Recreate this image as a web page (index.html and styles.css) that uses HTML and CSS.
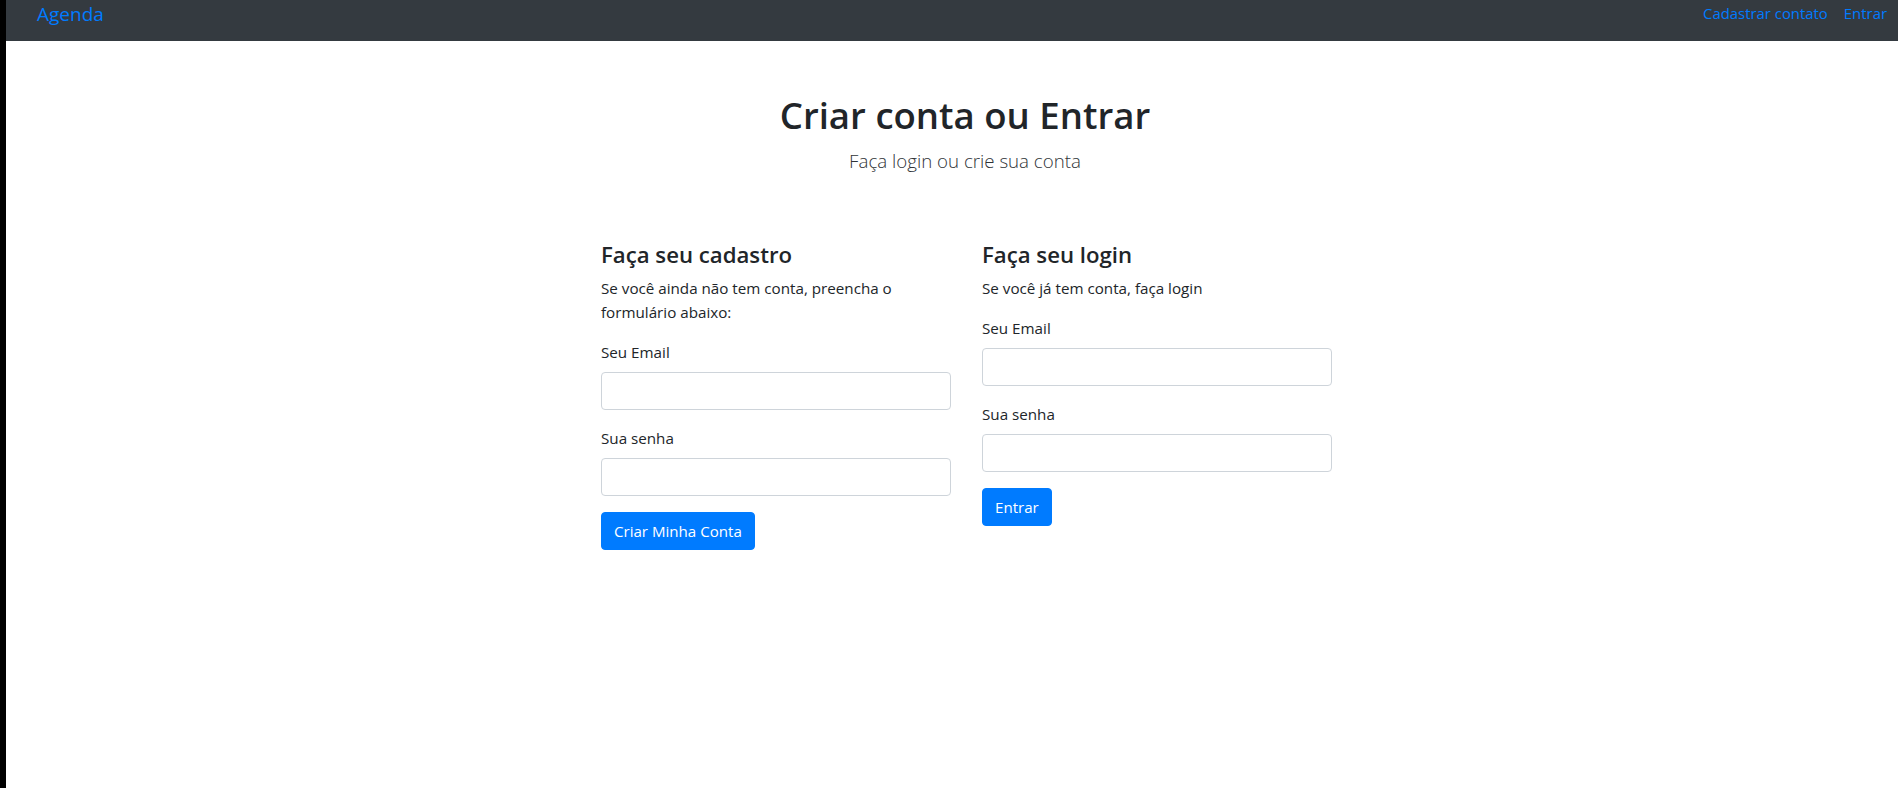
FILE: index.html
```html
<!DOCTYPE html>
<html lang="pt-BR">
<head>
<meta charset="utf-8">
<title>Agenda</title>
<link rel="stylesheet" href="styles.css">
</head>
<body>
<div class="edge"></div>
<div class="page">
  <nav class="navbar">
    <a class="brand" href="#">Agenda</a>
    <div class="nav-links">
      <a class="nav-link" href="#">Cadastrar contato</a>
      <a class="nav-link" href="#">Entrar</a>
    </div>
  </nav>
  <main>
    <header class="hero">
      <h1 class="title">Criar conta ou Entrar</h1>
      <p class="lead">Faça login ou crie sua conta</p>
    </header>
    <div class="columns">
      <section class="col">
        <h4 class="col-title">Faça seu cadastro</h4>
        <p class="col-text">Se você ainda não tem conta, preencha o formulário abaixo:</p>
        <form class="form">
          <div class="form-group">
            <label class="label">Seu Email</label>
            <input class="input" type="email">
          </div>
          <div class="form-group">
            <label class="label">Sua senha</label>
            <input class="input" type="password">
          </div>
          <button class="btn" type="button">Criar Minha Conta</button>
        </form>
      </section>
      <section class="col">
        <h4 class="col-title">Faça seu login</h4>
        <p class="col-text">Se você já tem conta, faça login</p>
        <form class="form">
          <div class="form-group">
            <label class="label">Seu Email</label>
            <input class="input" type="email">
          </div>
          <div class="form-group">
            <label class="label">Sua senha</label>
            <input class="input" type="password">
          </div>
          <button class="btn" type="button">Entrar</button>
        </form>
      </section>
    </div>
  </main>
</div>
</body>
</html>
```

FILE: styles.css
```css
* { box-sizing: border-box; }
html, body { margin: 0; height: 100%; }
body {
  display: flex;
  overflow: hidden;
  background: #fff;
  color: #212529;
  font-family: "Open Sans", "Noto Sans", sans-serif;
  font-size: 15.2px;
  line-height: 24px;
}
.edge { width: 6px; flex: none; background: #000; }
.page { width: 1918px; flex: none; }

.navbar {
  height: 41px;
  background: #343a40;
  display: flex;
  justify-content: space-between;
  align-items: flex-start;
  padding: 0 29px 0 31px;
}
.brand {
  color: #007bff;
  text-decoration: none;
  font-size: 19px;
  line-height: 24px;
  margin-top: 2px;
}
.nav-links { display: flex; }
.nav-link {
  color: #007bff;
  text-decoration: none;
  padding: 0 8px;
  font-size: 14.9px;
  line-height: 24px;
  margin-top: 1px;
}

.hero { text-align: center; padding-top: 51px; }
.title {
  margin: 0;
  font-size: 36.6px;
  font-weight: 600;
  line-height: 46px;
}
.lead {
  margin: 9px 0 0;
  font-size: 18.7px;
  font-weight: 300;
  line-height: 28px;
  color: #2f3337;
}

.columns {
  display: grid;
  grid-template-columns: 350px 350px;
  column-gap: 31px;
  justify-content: center;
  padding-left: 3px;
  margin-top: 64px;
}
.col-title {
  margin: 0 0 7px;
  padding-top: 1px;
  font-size: 22.2px;
  font-weight: 600;
  line-height: 29px;
}
.col-text { margin: 0 0 16px; }
.form-group { margin-bottom: 16px; }
.label { display: block; margin-bottom: 8px; }
.input {
  display: block;
  width: 100%;
  height: 38px;
  border: 1px solid #ced4da;
  border-radius: 4px;
  background: #fff;
  font: inherit;
}
.btn {
  height: 38px;
  padding: 0 12px;
  border: 1px solid #007bff;
  border-radius: 4px;
  background: #007bff;
  color: #fff;
  font-family: inherit;
  font-size: 15.1px;
  line-height: 24px;
}
```
